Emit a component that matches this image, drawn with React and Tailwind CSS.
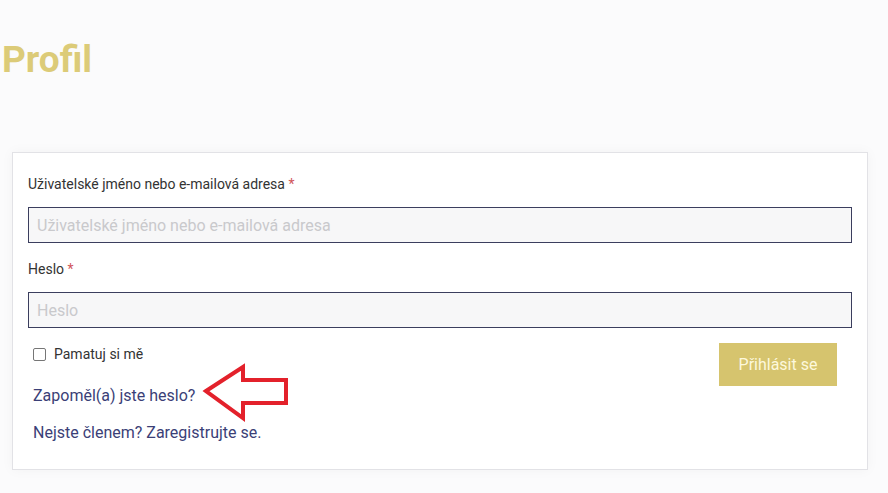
import React, { useState } from 'react';

const Field = ({ label, placeholder, type = 'text' }) => (
  <div className="flex flex-col">
    <label className="text-[14px] leading-5 text-[#333333]">
      {label} <span className="text-[#d0555a]">*</span>
    </label>
    <input
      type={type}
      placeholder={placeholder}
      className="mt-[13px] h-[36px] w-full border border-[#3b3e5e] bg-[#f7f7f8] px-2 text-[16px] text-[#333] placeholder:text-[#c9c9cc] outline-none"
    />
  </div>
);

const App = () => {
  const [remember, setRemember] = useState(false);

  return (
    <div
      className="min-h-[493px] bg-[#fbfbfc] pt-[36px]"
      style={{ fontFamily: 'Roboto, "Liberation Sans", sans-serif' }}
    >
      {/* Title */}
      <h1 className="ml-[2px] text-[37px] font-bold leading-[48px] text-[#dccb78]">Profil</h1>

      {/* Login card */}
      <div className="relative ml-[12px] mt-[68px] w-[856px] border border-[#e2e2e6] bg-white px-[15px] pt-[21px] pb-[24px] shadow-[0_0_12px_rgba(0,0,0,0.04)]">
        <Field
          label="Uživatelské jméno nebo e-mailová adresa"
          placeholder="Uživatelské jméno nebo e-mailová adresa"
        />
        <div className="mt-[16px]">
          <Field label="Heslo" placeholder="Heslo" type="password" />
        </div>

        <div className="mt-[15px] flex items-start justify-between">
          <div className="ml-[5px] flex flex-col">
            <label className="mt-[1px] flex items-center gap-[8px] text-[14px] leading-5 text-[#333333]">
              <input
                type="checkbox"
                checked={remember}
                onChange={(e) => setRemember(e.target.checked)}
                className="h-[13px] w-[13px] appearance-none rounded-[2px] border border-[#767676] bg-white"
              />
              Pamatuj si mě
            </label>
            <a href="#" className="mt-[20px] text-[16px] leading-6 text-[#3b3f77]">
              Zapoměl(a) jste heslo?
            </a>
            <a href="#" className="mt-[13px] text-[16px] leading-6 text-[#3b3f77]">
              Nejste členem? Zaregistrujte se.
            </a>
          </div>
          <button className="mr-[15px] h-[43px] w-[118px] bg-[#d6c46e] text-[16px] text-[#fdf8dc]">
            Přihlásit se
          </button>
        </div>

        {/* Red annotation arrow */}
        <svg
          className="absolute left-[188px] top-[208px]"
          width="92"
          height="62"
          viewBox="0 0 92 62"
          fill="none"
        >
          <path
            d="M5 30 L42 6 L42 19 L85 19 L85 42 L42 42 L42 57 Z"
            stroke="#e3212b"
            strokeWidth="4"
            strokeLinejoin="miter"
          />
        </svg>
      </div>
    </div>
  );
};

export default App;
